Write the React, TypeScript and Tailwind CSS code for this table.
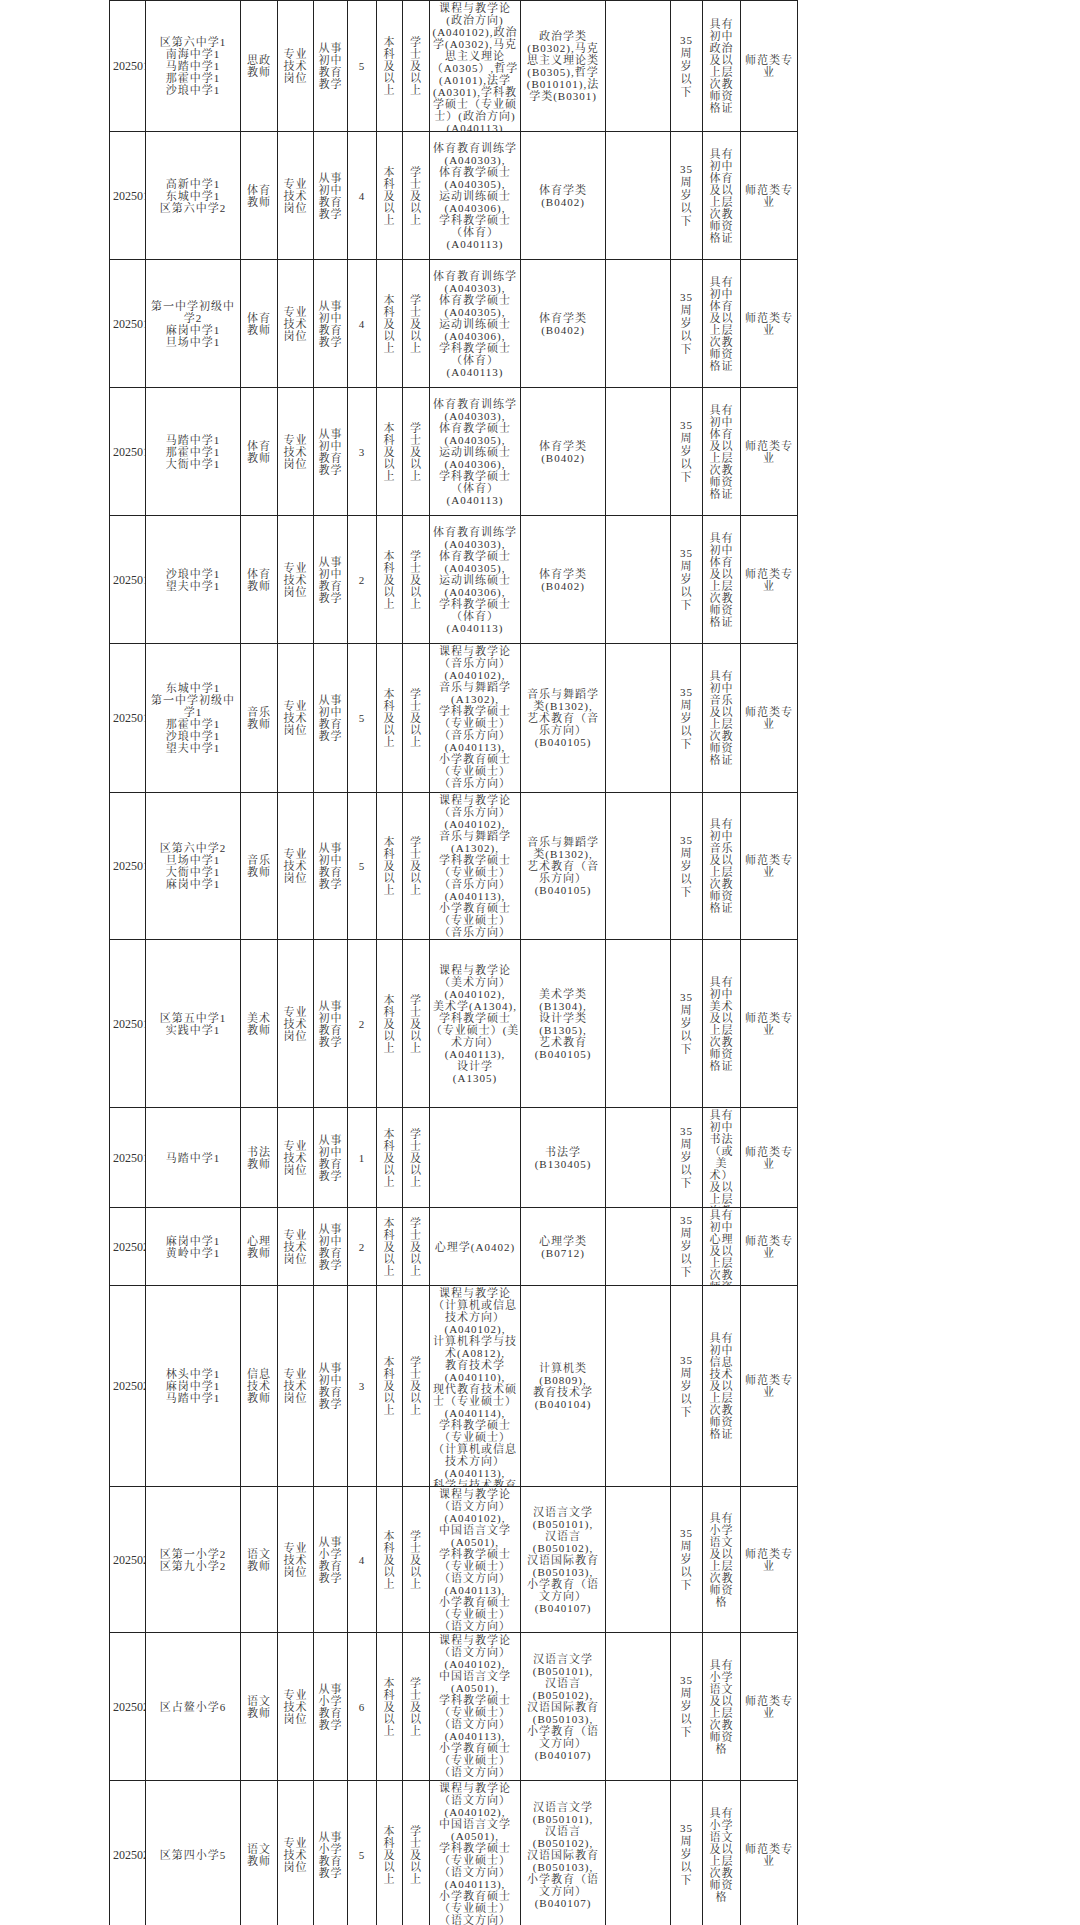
import React from 'react';

type Row = {
  h: string;
  code: string;
  schools: string[];
  pos: string[];
  cat: string[];
  n: string;
  grad: string[];
  ug: string[];
  cert: string[];
};

// column widths, left to right
const W = [
  'w-[36px]',
  'w-[95px]',
  'w-[37px]',
  'w-[36px]',
  'w-[34px]',
  'w-[29px]',
  'w-[26px]',
  'w-[27px]',
  'w-[91px]',
  'w-[85px]',
  'w-[65px]',
  'w-[32px]',
  'w-[38px]',
  'w-[57px]',
];

const PE_GRAD = [
  '体育教育训练学',
  '(A040303),',
  '体育教学硕士',
  '(A040305),',
  '运动训练硕士',
  '(A040306),',
  '学科教学硕士',
  '（体育）',
  '(A040113)',
];
const PE_UG = ['体育学类', '(B0402)'];
const PE_CERT = ['具有', '初中', '体育', '及以', '上层', '次教', '师资', '格证'];

const MUSIC_GRAD = [
  '课程与教学论',
  '（音乐方向）',
  '(A040102),',
  '音乐与舞蹈学',
  '(A1302),',
  '学科教学硕士',
  '（专业硕士）',
  '（音乐方向）',
  '(A040113),',
  '小学教育硕士',
  '（专业硕士）',
  '（音乐方向）',
  '(A040113)',
];
const MUSIC_UG = ['音乐与舞蹈学', '类(B1302),', '艺术教育（音', '乐方向）', '(B040105)'];
const MUSIC_CERT = ['具有', '初中', '音乐', '及以', '上层', '次教', '师资', '格证'];

const CN_GRAD = [
  '课程与教学论',
  '（语文方向）',
  '(A040102),',
  '中国语言文学',
  '(A0501),',
  '学科教学硕士',
  '（专业硕士）',
  '（语文方向）',
  '(A040113),',
  '小学教育硕士',
  '（专业硕士）',
  '（语文方向）',
  '(A040113)',
];
const CN_UG = [
  '汉语言文学',
  '(B050101),',
  '汉语言',
  '(B050102),',
  '汉语国际教育',
  '(B050103),',
  '小学教育（语',
  '文方向）',
  '(B040107)',
];
const CN_CERT = ['具有', '小学', '语文', '及以', '上层', '次教', '师资', '格'];

const MID = ['从事', '初中', '教育', '教学'];
const PRI = ['从事', '小学', '教育', '教学'];

const rows: Row[] = [
  {
    h: 'h-[131px]',
    code: '2025011',
    schools: ['区第六中学1', '南海中学1', '马踏中学1', '那霍中学1', '沙琅中学1'],
    pos: ['思政', '教师'],
    cat: MID,
    n: '5',
    grad: [
      '课程与教学论',
      '(政治方向)',
      '(A040102),政治',
      '学(A0302),马克',
      '思主义理论',
      '（A0305）,哲学',
      '(A0101),法学',
      '(A0301),学科教',
      '学硕士（专业硕',
      '士）(政治方向)',
      '(A040113)',
    ],
    ug: ['政治学类', '(B0302),马克', '思主义理论类', '(B0305),哲学', '(B010101),法', '学类(B0301)'],
    cert: ['具有', '初中', '政治', '及以', '上层', '次教', '师资', '格证'],
  },
  {
    h: 'h-[128px]',
    code: '2025012',
    schools: ['高新中学1', '东城中学1', '区第六中学2'],
    pos: ['体育', '教师'],
    cat: MID,
    n: '4',
    grad: PE_GRAD,
    ug: PE_UG,
    cert: PE_CERT,
  },
  {
    h: 'h-[128px]',
    code: '2025013',
    schools: ['第一中学初级中', '学2', '麻岗中学1', '旦场中学1'],
    pos: ['体育', '教师'],
    cat: MID,
    n: '4',
    grad: PE_GRAD,
    ug: PE_UG,
    cert: PE_CERT,
  },
  {
    h: 'h-[128px]',
    code: '2025014',
    schools: ['马踏中学1', '那霍中学1', '大衙中学1'],
    pos: ['体育', '教师'],
    cat: MID,
    n: '3',
    grad: PE_GRAD,
    ug: PE_UG,
    cert: PE_CERT,
  },
  {
    h: 'h-[128px]',
    code: '2025015',
    schools: ['沙琅中学1', '望夫中学1'],
    pos: ['体育', '教师'],
    cat: MID,
    n: '2',
    grad: PE_GRAD,
    ug: PE_UG,
    cert: PE_CERT,
  },
  {
    h: 'h-[149px]',
    code: '2025016',
    schools: ['东城中学1', '第一中学初级中', '学1', '那霍中学1', '沙琅中学1', '望夫中学1'],
    pos: ['音乐', '教师'],
    cat: MID,
    n: '5',
    grad: MUSIC_GRAD,
    ug: MUSIC_UG,
    cert: MUSIC_CERT,
  },
  {
    h: 'h-[147px]',
    code: '2025017',
    schools: ['区第六中学2', '旦场中学1', '大衙中学1', '麻岗中学1'],
    pos: ['音乐', '教师'],
    cat: MID,
    n: '5',
    grad: MUSIC_GRAD,
    ug: MUSIC_UG,
    cert: MUSIC_CERT,
  },
  {
    h: 'h-[168px]',
    code: '2025018',
    schools: ['区第五中学1', '实践中学1'],
    pos: ['美术', '教师'],
    cat: MID,
    n: '2',
    grad: [
      '课程与教学论',
      '（美术方向）',
      '(A040102),',
      '美术学(A1304),',
      '学科教学硕士',
      '（专业硕士）(美',
      '术方向）',
      '(A040113),',
      '设计学',
      '(A1305)',
    ],
    ug: ['美术学类', '(B1304),', '设计学类', '(B1305),', '艺术教育', '(B040105)'],
    cert: ['具有', '初中', '美术', '及以', '上层', '次教', '师资', '格证'],
  },
  {
    h: 'h-[100px]',
    code: '2025019',
    schools: ['马踏中学1'],
    pos: ['书法', '教师'],
    cat: MID,
    n: '1',
    grad: [],
    ug: ['书法学', '(B130405)'],
    cert: ['具有', '初中', '书法', '（或', '美', '术）', '及以', '上层', '次教', '师资', '格证'],
  },
  {
    h: 'h-[78px]',
    code: '2025020',
    schools: ['麻岗中学1', '黄岭中学1'],
    pos: ['心理', '教师'],
    cat: MID,
    n: '2',
    grad: ['心理学(A0402)'],
    ug: ['心理学类', '(B0712)'],
    cert: ['具有', '初中', '心理', '及以', '上层', '次教', '师资', '格证'],
  },
  {
    h: 'h-[201px]',
    code: '2025021',
    schools: ['林头中学1', '麻岗中学1', '马踏中学1'],
    pos: ['信息', '技术', '教师'],
    cat: MID,
    n: '3',
    grad: [
      '课程与教学论',
      '（计算机或信息',
      '技术方向）',
      '(A040102),',
      '计算机科学与技',
      '术(A0812),',
      '教育技术学',
      '(A040110),',
      '现代教育技术硕',
      '士（专业硕士）',
      '(A040114),',
      '学科教学硕士',
      '（专业硕士）',
      '（计算机或信息',
      '技术方向）',
      '(A040113),',
      '科学与技术教育',
      '（专业硕士）',
    ],
    ug: ['计算机类', '(B0809),', '教育技术学', '(B040104)'],
    cert: ['具有', '初中', '信息', '技术', '及以', '上层', '次教', '师资', '格证'],
  },
  {
    h: 'h-[146px]',
    code: '2025022',
    schools: ['区第一小学2', '区第九小学2'],
    pos: ['语文', '教师'],
    cat: PRI,
    n: '4',
    grad: CN_GRAD,
    ug: CN_UG,
    cert: CN_CERT,
  },
  {
    h: 'h-[148px]',
    code: '2025023',
    schools: ['区占鳌小学6'],
    pos: ['语文', '教师'],
    cat: PRI,
    n: '6',
    grad: CN_GRAD,
    ug: CN_UG,
    cert: CN_CERT,
  },
  {
    h: 'h-[148px]',
    code: '2025024',
    schools: ['区第四小学5'],
    pos: ['语文', '教师'],
    cat: PRI,
    n: '5',
    grad: CN_GRAD,
    ug: CN_UG,
    cert: CN_CERT,
  },
];

function Cell({ w, lines, left, loose }: { w: string; lines: string[]; left?: boolean; loose?: boolean }) {
  return (
    <div className={`${w} shrink-0 h-full border-r border-[#222] overflow-hidden flex flex-col`}>
      <div
        className={`my-auto py-[1px] ${left ? 'text-left pl-[3px] tracking-normal text-[12px]' : 'text-center'} ${loose ? 'leading-[13px]' : 'leading-[12px]'}`}
      >
        {lines.map((l, i) => (
          <div key={i} className="whitespace-nowrap">
            {l}
          </div>
        ))}
      </div>
    </div>
  );
}

function TableRow({ r }: { r: Row }) {
  return (
    <div className={`${r.h} flex border-b border-[#222]`}>
      <Cell w={W[0]} lines={[r.code]} left />
      <Cell w={W[1]} lines={r.schools} />
      <Cell w={W[2]} lines={r.pos} />
      <Cell w={W[3]} lines={['专业', '技术', '岗位']} />
      <Cell w={W[4]} lines={r.cat} />
      <Cell w={W[5]} lines={[r.n]} />
      <Cell w={W[6]} lines={['本', '科', '及', '以', '上']} />
      <Cell w={W[7]} lines={['学', '士', '及', '以', '上']} />
      <Cell w={W[8]} lines={r.grad} />
      <Cell w={W[9]} lines={r.ug} />
      <Cell w={W[10]} lines={[]} />
      <Cell w={W[11]} lines={['35', '周', '岁', '以', '下']} loose />
      <Cell w={W[12]} lines={r.cert} />
      <Cell w={W[13]} lines={['师范类专', '业']} />
    </div>
  );
}

export default function App() {
  return (
    <div
      className="w-[1080px] min-h-[1925px] bg-white text-[11px] tracking-[1px] text-[#333]"
      style={{ fontFamily: '"Liberation Serif", "Noto Serif CJK SC", "Noto Sans CJK SC", serif' }}
    >
      <div className="ml-[109px] w-[689px] border-l border-t border-[#222]">
        {rows.map((r, i) => (
          <TableRow key={i} r={r} />
        ))}
      </div>
    </div>
  );
}
